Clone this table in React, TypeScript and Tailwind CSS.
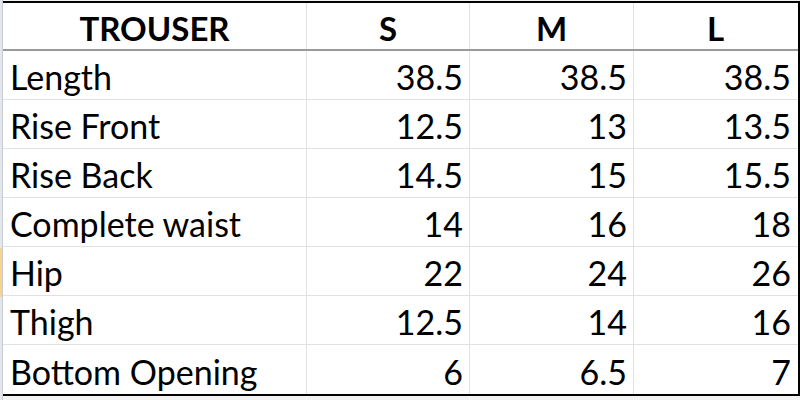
const headers = ['TROUSER', 'S', 'M', 'L'];

const rows: [string, string, string, string][] = [
  ['Length', '38.5', '38.5', '38.5'],
  ['Rise Front', '12.5', '13', '13.5'],
  ['Rise Back', '14.5', '15', '15.5'],
  ['Complete waist', '14', '16', '18'],
  ['Hip', '22', '24', '26'],
  ['Thigh', '12.5', '14', '16'],
  ['Bottom Opening', '6', '6.5', '7'],
];

const font = { fontFamily: 'Lato, "Open Sans", sans-serif' };

export default function App() {
  return (
    <div className="w-[800px] h-[400px] flex bg-white text-black overflow-hidden" style={font}>
      {/* row header edge, Hip row is the selected one */}
      <div className="w-[3px] flex flex-col bg-[#e3e6eb] border-r border-[#c9ccd2]">
        <div className="h-[248px]" />
        <div className="h-[49px] bg-[#f6d48c]" />
      </div>
      <div className="flex-1 flex flex-col pt-px bg-[#f3f3f3]">
        <div className="border-t-2 border-b-2 border-r-2 border-black bg-white">
          <div className="grid grid-cols-[304px_163px_164px_163px] h-[48px] border-b-2 border-[#9a9a9a]">
            {headers.map((h, i) => (
              <div
                key={h}
                className={`flex items-center justify-center pt-[5px] font-bold text-[33px] leading-none ${i < 3 ? 'border-r border-[#e1e1e1]' : ''}`}
              >
                {h}
              </div>
            ))}
          </div>
          {rows.map((r) => (
            <div
              key={r[0]}
              className="grid grid-cols-[304px_163px_164px_163px] h-[49px] border-b border-[#e1e1e1] last:border-b-0"
            >
              {r.map((c, i) => (
                <div
                  key={i}
                  className={`flex items-center pt-[4px] text-[34px] leading-none ${i === 0 ? 'justify-start pl-[7px]' : 'justify-end pr-[6px]'} ${i < 3 ? 'border-r border-[#e1e1e1]' : ''}`}
                >
                  {c}
                </div>
              ))}
            </div>
          ))}
        </div>
      </div>
    </div>
  );
}
